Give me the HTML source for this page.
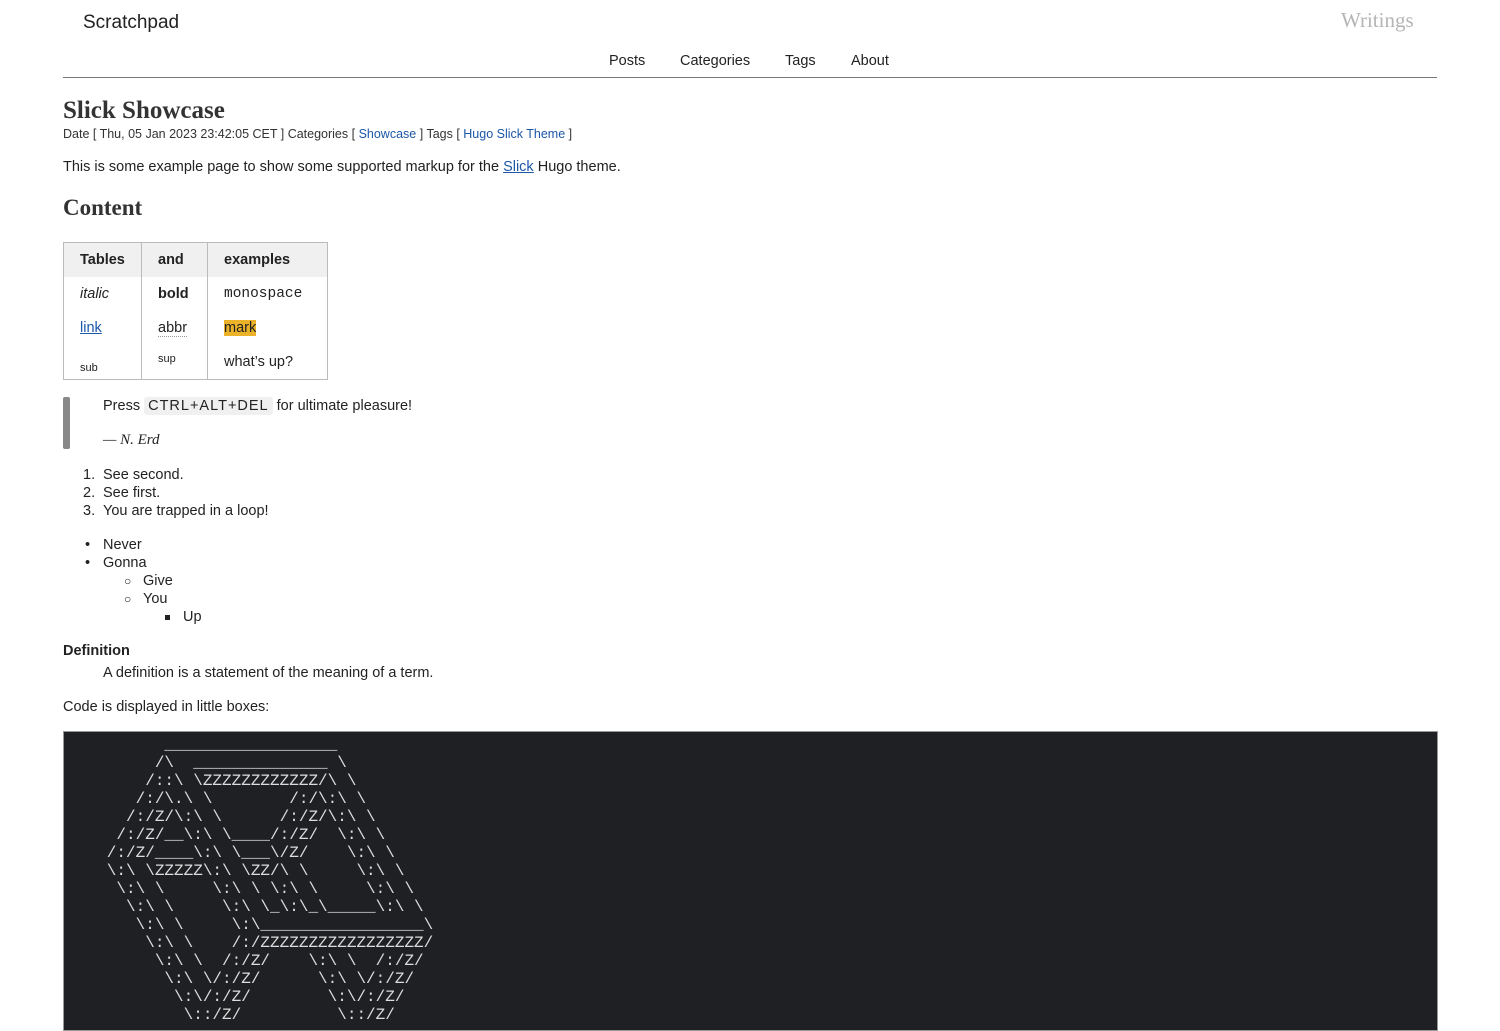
<!DOCTYPE html>
<html><head><meta charset="utf-8"><style>
body{margin:0;width:1500px;height:1000px;overflow:hidden;background:#fff;color:#222;font-family:"Liberation Sans",sans-serif;font-size:14.5px;position:relative}
.a{position:absolute;white-space:nowrap;line-height:18px}
a{color:#1c57a8}
.serif{font-family:"Liberation Serif",serif}
table{position:absolute;left:63px;top:242px;border-collapse:collapse;border:1px solid #bbb;font-size:14.5px;table-layout:fixed;width:264px}
td,th{border-right:1px solid #bbb;padding:0 0 0 16px;height:34px;line-height:18px;text-align:left;vertical-align:middle;overflow:hidden}
th{background:#f0f0f0;font-weight:bold}
pre{position:absolute;left:63px;top:731px;width:1375px;height:300px;margin:0;background:#1f2023;border:1px solid #999;color:#ddd;font-family:"Liberation Mono",monospace;font-size:16px;line-height:18px;padding:4px 0 0 14px;box-sizing:border-box}
</style></head><body>
<div class="a" style="left:83px;top:12px;font-size:19px;line-height:22px">Scratchpad</div>
<div class="a serif" style="left:1341px;top:8px;font-size:21px;line-height:24px;color:#b5b5b5">Writings</div>
<div class="a" style="left:609px;top:52px">Posts</div>
<div class="a" style="left:680px;top:52px">Categories</div>
<div class="a" style="left:785px;top:52px">Tags</div>
<div class="a" style="left:851px;top:52px">About</div>
<div style="position:absolute;left:63px;top:77px;width:1374px;height:1px;background:#777"></div>
<div class="a serif" style="left:63px;top:96px;font-size:25px;line-height:30px;font-weight:bold;color:#333">Slick Showcase</div>
<div class="a" style="left:63px;top:125px;font-size:12.5px;color:#333">Date [ Thu, 05 Jan 2023 23:42:05 CET ] Categories [ <span style="color:#1c57a8">Showcase</span> ] Tags [ <span style="color:#1c57a8">Hugo Slick Theme</span> ]</div>
<div class="a" style="left:63px;top:158px">This is some example page to show some supported markup for the <a href="#">Slick</a> Hugo theme.</div>
<div class="a serif" style="left:63px;top:194px;font-size:23px;line-height:28px;font-weight:bold;color:#333">Content</div>
<table>
<colgroup><col style="width:78px"><col style="width:66px"><col style="width:120px"></colgroup>
<tr><th>Tables</th><th>and</th><th>examples</th></tr>
<tr><td><i>italic</i></td><td><b>bold</b></td><td style="font-family:'Liberation Mono',monospace;font-size:14.5px">monospace</td></tr>
<tr><td><a href="#">link</a></td><td><span style="border-bottom:1px dotted #999">abbr</span></td><td><span style="background:#ebb32a">mark</span></td></tr>
<tr><td><span style="position:relative;top:5px;font-size:11px">sub</span></td><td><span style="position:relative;top:-4px;font-size:11px">sup</span></td><td>what’s up?</td></tr>
</table>
<div style="position:absolute;left:63px;top:397px;width:7px;height:52px;background:#888;border-radius:2px"></div>
<div class="a" style="left:103px;top:397px">Press <span style="background:#f0f0f0;border-radius:3px;padding:1px 4px;letter-spacing:1px">CTRL+ALT+DEL</span> for ultimate pleasure!</div>
<div class="a serif" style="left:103px;top:431px;font-style:italic;font-size:15px">— N. Erd</div>
<div class="a" style="left:83px;top:466px">1.</div><div class="a" style="left:103px;top:466px">See second.</div>
<div class="a" style="left:83px;top:484px">2.</div><div class="a" style="left:103px;top:484px">See first.</div>
<div class="a" style="left:83px;top:502px">3.</div><div class="a" style="left:103px;top:502px">You are trapped in a loop!</div>
<div class="a" style="left:85px;top:536px">•</div><div class="a" style="left:103px;top:536px">Never</div>
<div class="a" style="left:85px;top:554px">•</div><div class="a" style="left:103px;top:554px">Gonna</div>
<div class="a" style="left:124px;top:572px;font-size:12px">○</div><div class="a" style="left:143px;top:572px">Give</div>
<div class="a" style="left:124px;top:590px;font-size:12px">○</div><div class="a" style="left:143px;top:590px">You</div>
<div style="position:absolute;left:165px;top:615px;width:5px;height:5px;background:#222"></div><div class="a" style="left:183px;top:608px">Up</div>
<div class="a" style="left:63px;top:642px;font-weight:bold">Definition</div>
<div class="a" style="left:103px;top:664px">A definition is a statement of the meaning of a term.</div>
<div class="a" style="left:63px;top:698px">Code is displayed in little boxes:</div>
<pre>         __________________
        /\  ______________ \
       /::\ \ZZZZZZZZZZZZ/\ \
      /:/\.\ \        /:/\:\ \
     /:/Z/\:\ \      /:/Z/\:\ \
    /:/Z/__\:\ \____/:/Z/  \:\ \
   /:/Z/____\:\ \___\/Z/    \:\ \
   \:\ \ZZZZZ\:\ \ZZ/\ \     \:\ \
    \:\ \     \:\ \ \:\ \     \:\ \
     \:\ \     \:\ \_\:\_\_____\:\ \
      \:\ \     \:\_________________\
       \:\ \    /:/ZZZZZZZZZZZZZZZZZ/
        \:\ \  /:/Z/    \:\ \  /:/Z/
         \:\ \/:/Z/      \:\ \/:/Z/
          \:\/:/Z/        \:\/:/Z/
           \::/Z/          \::/Z/</pre>
</body></html>
